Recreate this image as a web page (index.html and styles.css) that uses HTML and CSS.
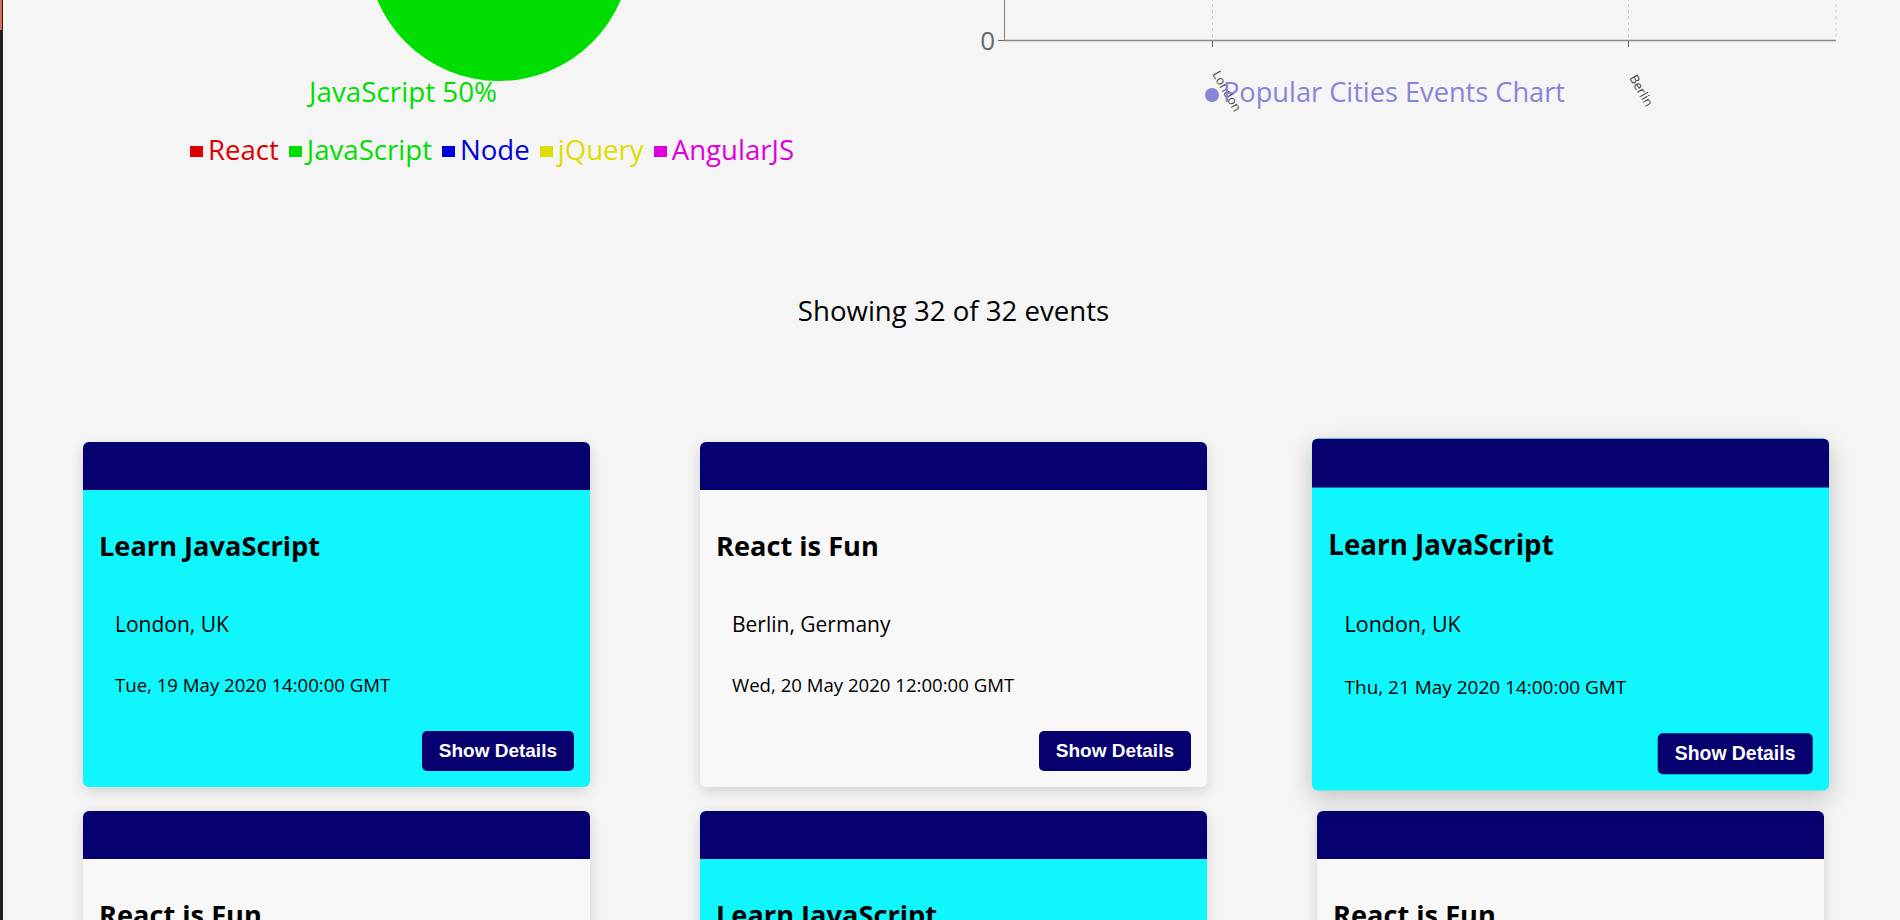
FILE: index.html
```html
<!DOCTYPE html>
<html lang="en">
<head>
<meta charset="utf-8">
<title>Meet App</title>
<link rel="stylesheet" href="styles.css">
</head>
<body>
<div class="app">
  <div class="edge"><div class="edge-top"></div></div>
  <main class="page">
    <section class="charts">
      <div class="pie-chart">
        <svg class="chart-svg" width="700" height="310" viewBox="0 0 700 310">
          <circle cx="350" cy="149" r="132" fill="#00dd00"/>
          <text x="160" y="302" class="pie-label">JavaScript 50%</text>
        </svg>
        <ul class="legend">
          <li class="legend-item legend-react"><span class="swatch"></span>React</li>
          <li class="legend-item legend-js"><span class="swatch"></span>JavaScript</li>
          <li class="legend-item legend-node"><span class="swatch"></span>Node</li>
          <li class="legend-item legend-jquery"><span class="swatch"></span>jQuery</li>
          <li class="legend-item legend-angular"><span class="swatch"></span>AngularJS</li>
        </ul>
      </div>
      <div class="bar-chart">
        <svg class="chart-svg" width="940" height="310" viewBox="0 0 940 310">
          <g class="grid-lines">
            <line x1="272.5" y1="0" x2="272.5" y2="240"/>
            <line x1="688.5" y1="0" x2="688.5" y2="240"/>
            <line x1="896" y1="0" x2="896" y2="240"/>
          </g>
          <line class="axis" x1="64.5" y1="0" x2="64.5" y2="240.5"/>
          <line class="axis x-axis" x1="64" y1="240.6" x2="896" y2="240.6"/>
          <line class="tick" x1="58" y1="240.5" x2="64" y2="240.5"/>
          <line class="tick" x1="272.5" y1="241" x2="272.5" y2="247"/>
          <line class="tick" x1="688.5" y1="241" x2="688.5" y2="247"/>
          <text class="y-label" x="55" y="250" text-anchor="end">0</text>
          <text class="x-label" x="272" y="274" transform="rotate(60 272 274)">London</text>
          <text class="x-label" x="689" y="278" transform="rotate(60 689 278)">Berlin</text>
          <circle cx="272" cy="295" r="7" fill="#8884d8"/>
          <text class="bar-legend" x="283" y="302">Popular Cities Events Chart</text>
        </svg>
      </div>
    </section>

    <h2 class="count">Showing 32 of 32 events</h2>

    <div class="events">
      <article class="card card--js">
        <div class="card-head"></div>
        <div class="card-body">
          <h3 class="card-title">Learn JavaScript</h3>
          <p class="card-location">London, UK</p>
          <p class="card-date">Tue, 19 May 2020 14:00:00 GMT</p>
          <button class="card-button">Show Details</button>
        </div>
      </article>
      <article class="card">
        <div class="card-head"></div>
        <div class="card-body">
          <h3 class="card-title">React is Fun</h3>
          <p class="card-location">Berlin, Germany</p>
          <p class="card-date">Wed, 20 May 2020 12:00:00 GMT</p>
          <button class="card-button">Show Details</button>
        </div>
      </article>
      <article class="card card--js card--hover">
        <div class="card-head"></div>
        <div class="card-body">
          <h3 class="card-title">Learn JavaScript</h3>
          <p class="card-location">London, UK</p>
          <p class="card-date">Thu, 21 May 2020 14:00:00 GMT</p>
          <button class="card-button">Show Details</button>
        </div>
      </article>
      <article class="card">
        <div class="card-head"></div>
        <div class="card-body">
          <h3 class="card-title">React is Fun</h3>
          <p class="card-location">Berlin, Germany</p>
          <p class="card-date">Fri, 22 May 2020 12:00:00 GMT</p>
          <button class="card-button">Show Details</button>
        </div>
      </article>
      <article class="card card--js">
        <div class="card-head"></div>
        <div class="card-body">
          <h3 class="card-title">Learn JavaScript</h3>
          <p class="card-location">London, UK</p>
          <p class="card-date">Sat, 23 May 2020 14:00:00 GMT</p>
          <button class="card-button">Show Details</button>
        </div>
      </article>
      <article class="card">
        <div class="card-head"></div>
        <div class="card-body">
          <h3 class="card-title">React is Fun</h3>
          <p class="card-location">Berlin, Germany</p>
          <p class="card-date">Sun, 24 May 2020 12:00:00 GMT</p>
          <button class="card-button">Show Details</button>
        </div>
      </article>
    </div>
  </main>
</div>
</body>
</html>
```

FILE: styles.css
```css
* { box-sizing: border-box; }

html, body {
  margin: 0;
  background: #f5f5f5;
  font-family: "Open Sans", "Noto Sans", sans-serif;
  color: #000;
  overflow: hidden;
}

.app {
  display: flex;
  min-height: 100vh;
}

.edge {
  flex: 0 0 3px;
  background: #1f1f1f;
}

.edge-top {
  width: 2px;
  height: 30px;
  background: #e2694c;
}

.page {
  flex: 1;
  min-width: 0;
  padding-left: 4px;
}

/* charts */
.charts {
  display: flex;
  margin-top: -200px;
}

.chart-svg {
  display: block;
  overflow: visible;
}

.pie-chart {
  flex: none;
  width: 700px;
  margin-left: 142px;
}

.pie-label {
  font-family: "Open Sans", "Noto Sans", sans-serif;
  font-size: 27.8px;
  fill: #00dd00;
}

.legend {
  list-style: none;
  margin: 23px 0 0;
  padding: 0 14px 0 0;
  display: flex;
  justify-content: center;
  gap: 10px;
  font-size: 27.6px;
  line-height: 33px;
}

.legend-item {
  display: flex;
  align-items: center;
}

.swatch {
  width: 13px;
  height: 11px;
  margin: 4px 5px 0 0;
  background: currentColor;
}

.legend-react { color: #dd0000; }
.legend-js { color: #00dd00; }
.legend-node { color: #0000dd; }
.legend-jquery { color: #dddd00; }
.legend-angular { color: #dd00dd; }

.bar-chart {
  flex: none;
  width: 940px;
  margin-left: 91px;
}

.grid-lines line {
  stroke: #cfcfcf;
  stroke-width: 1;
  stroke-dasharray: 3 3;
}

.axis {
  stroke: #8c8c8c;
  stroke-width: 1.2;
}

.x-axis {
  stroke-width: 1.5;
}

.tick {
  stroke: #666;
  stroke-width: 1;
}

.y-label {
  font-family: "Open Sans", "Noto Sans", sans-serif;
  font-size: 26px;
  fill: #666;
}

.x-label {
  font-family: "Open Sans", "Noto Sans", sans-serif;
  font-size: 12.5px;
  fill: #444;
}

.bar-legend {
  font-family: "Open Sans", "Noto Sans", sans-serif;
  font-size: 27.2px;
  fill: #8884d8;
}

/* count */
.count {
  margin: 126px 0 0;
  text-align: center;
  font-size: 27.6px;
  line-height: 37px;
  font-weight: 400;
}

/* events */
.events {
  display: grid;
  grid-template-columns: repeat(3, 507px);
  column-gap: 110px;
  row-gap: 24px;
  justify-content: center;
  margin-top: 113px;
  padding-bottom: 40px;
}

.card {
  display: flex;
  flex-direction: column;
  height: 345px;
  background: #f8f8f8;
  border-radius: 6px;
  overflow: hidden;
  box-shadow: 0 4px 14px rgba(0, 0, 0, 0.14);
}

.card--js {
  background: #0ff7fd;
}

.card--hover {
  transform: scale(1.02);
  box-shadow: 0 8px 24px rgba(0, 0, 0, 0.2);
}

.card-head {
  flex: none;
  height: 48px;
  background: #07006f;
}

.card-body {
  flex: 1;
  display: flex;
  flex-direction: column;
  padding: 40px 16px 16px;
}

.card-title {
  margin: 0;
  font-size: 27.2px;
  line-height: 32px;
  font-weight: 700;
}

.card-location {
  margin: 48px 0 0 16px;
  font-size: 21px;
  line-height: 28px;
}

.card-date {
  margin: 34px 0 0 16px;
  font-size: 18.6px;
  line-height: 26px;
}

.card-button {
  align-self: flex-end;
  margin-top: 33px;
  height: 40px;
  padding: 0 17px;
  border: 0;
  border-radius: 5px;
  background: #07006f;
  color: #fff;
  font-family: "Liberation Sans", Arial, sans-serif;
  font-size: 19px;
  font-weight: 700;
}
```
